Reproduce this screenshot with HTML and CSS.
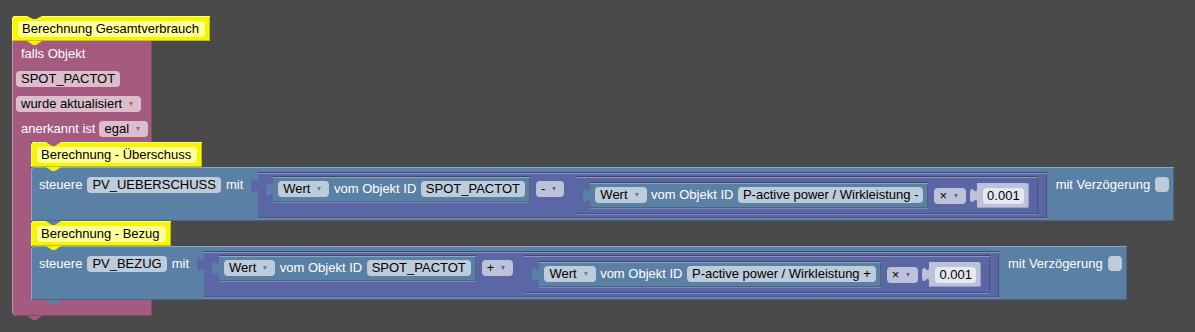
FILE: index.html
```html
<!DOCTYPE html>
<html lang="de">
	<head>
		<meta charset="UTF-8" />
		<meta name="viewport" content="width=device-width, initial-scale=1.0" />
		<title>Blockly</title>
		<link rel="stylesheet" href="styles.css">
	</head>
	<body>
		<div class="workspace">
			<div class="event">
				<div class="stmt comment first"><span class="cfield">Berechnung Gesamtverbrauch</span></div>
				<div class="event-head">
					<div class="hrow"><span class="lbl">falls Objekt</span></div>
					<div class="hrow"><span class="fld">SPOT_PACTOT</span></div>
					<div class="hrow"><span class="fld dd">wurde aktualisiert<i class="arr"></i></span></div>
					<div class="hrow"><span class="lbl">anerkannt ist</span><span class="fld dd">egal<i class="arr"></i></span></div>
				</div>
				<div class="event-mouth">
					<div class="event-arm"></div>
					<div class="stack">
						<div class="stmt comment"><span class="cfield">Berechnung - Überschuss</span></div>
						<div class="stmt set">
							<div class="set-head"><span class="lbl">steuere</span><span class="fld">PV_UEBERSCHUSS</span><span class="lbl">mit</span></div>
							<div class="val">
								<svg class="tab math-fill" viewBox="0 0 8 15" preserveAspectRatio="none"><path d="M8 0C8 10 0 -8 0 7.5C0 23 8 5 8 15Z"/></svg>
								<div class="math">
									<div class="val">
										<svg class="tab get-fill" viewBox="0 0 8 15" preserveAspectRatio="none"><path d="M8 0C8 10 0 -8 0 7.5C0 23 8 5 8 15Z"/></svg>
										<div class="get"><span class="fld dd">Wert<i class="arr"></i></span><span class="lbl">vom Objekt ID</span><span class="fld">SPOT_PACTOT</span></div>
									</div>
									<span class="fld dd">-<i class="arr"></i></span>
									<div class="val">
										<svg class="tab math-fill" viewBox="0 0 8 15" preserveAspectRatio="none"><path d="M8 0C8 10 0 -8 0 7.5C0 23 8 5 8 15Z"/></svg>
										<div class="math inner">
											<div class="val">
												<svg class="tab get-fill" viewBox="0 0 8 15" preserveAspectRatio="none"><path d="M8 0C8 10 0 -8 0 7.5C0 23 8 5 8 15Z"/></svg>
												<div class="get"><span class="fld dd">Wert<i class="arr"></i></span><span class="lbl">vom Objekt ID</span><span class="fld">P-active power / Wirkleistung -</span></div>
											</div>
											<span class="fld dd">×<i class="arr"></i></span>
											<div class="val">
												<svg class="tab num-fill" viewBox="0 0 8 15" preserveAspectRatio="none"><path d="M8 0C8 10 0 -8 0 7.5C0 23 8 5 8 15Z"/></svg>
												<div class="num"><span class="fld">0.001</span></div>
											</div>
										</div>
									</div>
								</div>
							</div>
							<span class="lbl delay">mit Verzögerung</span><span class="check"></span>
						</div>
						<div class="stmt comment"><span class="cfield">Berechnung - Bezug</span></div>
						<div class="stmt set">
							<div class="set-head"><span class="lbl">steuere</span><span class="fld">PV_BEZUG</span><span class="lbl">mit</span></div>
							<div class="val">
								<svg class="tab math-fill" viewBox="0 0 8 15" preserveAspectRatio="none"><path d="M8 0C8 10 0 -8 0 7.5C0 23 8 5 8 15Z"/></svg>
								<div class="math">
									<div class="val">
										<svg class="tab get-fill" viewBox="0 0 8 15" preserveAspectRatio="none"><path d="M8 0C8 10 0 -8 0 7.5C0 23 8 5 8 15Z"/></svg>
										<div class="get"><span class="fld dd">Wert<i class="arr"></i></span><span class="lbl">vom Objekt ID</span><span class="fld">SPOT_PACTOT</span></div>
									</div>
									<span class="fld dd">+<i class="arr"></i></span>
									<div class="val">
										<svg class="tab math-fill" viewBox="0 0 8 15" preserveAspectRatio="none"><path d="M8 0C8 10 0 -8 0 7.5C0 23 8 5 8 15Z"/></svg>
										<div class="math inner">
											<div class="val">
												<svg class="tab get-fill" viewBox="0 0 8 15" preserveAspectRatio="none"><path d="M8 0C8 10 0 -8 0 7.5C0 23 8 5 8 15Z"/></svg>
												<div class="get"><span class="fld dd">Wert<i class="arr"></i></span><span class="lbl">vom Objekt ID</span><span class="fld">P-active power / Wirkleistung +</span></div>
											</div>
											<span class="fld dd">×<i class="arr"></i></span>
											<div class="val">
												<svg class="tab num-fill" viewBox="0 0 8 15" preserveAspectRatio="none"><path d="M8 0C8 10 0 -8 0 7.5C0 23 8 5 8 15Z"/></svg>
												<div class="num"><span class="fld">0.001</span></div>
											</div>
										</div>
									</div>
								</div>
							</div>
							<span class="lbl delay">mit Verzögerung</span><span class="check"></span>
						</div>
					</div>
				</div>
				<div class="event-foot"></div>
			</div>
		</div>
	</body>
</html>
```

FILE: styles.css
```css
* {
	box-sizing: border-box;
}

body {
	margin: 0;
	height: 332px;
	overflow: hidden;
	background: #4a4a4a;
	font: 13px "Liberation Sans", Arial, sans-serif;
}

.workspace {
	padding: 16px 0 0 12px;
}

/* statement blocks stacked on top of each other */
.event,
.stack {
	display: flex;
	flex-direction: column;
	align-items: flex-start;
}

.stmt {
	position: relative;
	border-radius: 4px 0 0 0;
}

/* the next-connection tab hanging under a statement block */
.stmt::after,
.event-head::after,
.event-foot::after {
	content: "";
	position: absolute;
	top: 100%;
	left: 15px;
	width: 15px;
	height: 4px;
	background: inherit;
	clip-path: polygon(0 0, 100% 0, 9px 100%, 6px 100%);
	z-index: 2;
}

.first::before {
	content: "";
	position: absolute;
	top: 0;
	left: 15px;
	width: 15px;
	height: 3px;
	background: #4a4a4a;
	clip-path: polygon(0 0, 100% 0, 9px 100%, 6px 100%);
}

.lbl {
	color: #fff;
	line-height: 16px;
	white-space: nowrap;
}

.fld {
	display: inline-flex;
	align-items: center;
	height: 16px;
	line-height: 16px;
	padding: 0 5px;
	border-radius: 4px;
	color: #000;
	white-space: nowrap;
}

.dd {
	padding-right: 8px;
}

.arr {
	width: 0;
	height: 0;
	margin-left: 7px;
	border-left: 2.5px solid transparent;
	border-right: 2.5px solid transparent;
	border-top: 4px solid;
}

/* comment block */
.comment {
	background: #f5f500;
	padding: 5px 5px 4px 6px;
	box-shadow: inset 0 1px 0 #ffff80, inset 1px 0 0 #ffff80, inset 0 -1px 0 #c2c200, inset -1px 0 0 #c2c200;
}

.cfield {
	display: block;
	height: 16px;
	line-height: 16px;
	padding: 0 6px 0 4px;
	border-radius: 4px;
	background: #ffff99;
	color: #000;
	white-space: nowrap;
}

/* trigger block (purple C shape) */
.event-head {
	position: relative;
	width: 140px;
	padding: 0 4px 1px;
	background: #a55b80;
	box-shadow: inset 1px 0 0 #c08ca6, inset -1px 0 0 #844966;
}

.event-head::after {
	left: 34px;
}

.hrow {
	display: flex;
	align-items: center;
	gap: 4px;
	height: 25px;
}

.hrow .lbl:first-child {
	margin-left: 5px;
}

.event-head .fld {
	background: #dbbdcc;
}

.event-head .arr {
	color: #a55b80;
}

.event-mouth {
	display: flex;
}

.event-arm {
	width: 19px;
	background: #a55b80;
	box-shadow: inset 1px 0 0 #c08ca6;
}

.event-foot {
	position: relative;
	width: 140px;
	height: 16px;
	background: #a55b80;
	border-radius: 0 0 0 5px;
	box-shadow: inset 1px 0 0 #c08ca6, inset 0 -1px 0 #844966, inset -1px 0 0 #844966;
}

/* "steuere ... mit" block */
.set {
	display: flex;
	align-items: flex-start;
	padding: 6px 5px 3px 8px;
	background: #5b80a5;
	box-shadow: inset 0 1px 0 #8ca6c0, inset 1px 0 0 #8ca6c0, inset 0 -1px 0 #496684, inset -1px 0 0 #496684;
}

.set-head {
	display: flex;
	align-items: center;
	gap: 5px;
	margin-top: 4px;
}

.set .fld {
	background: #bdccdb;
}

.set .arr {
	color: #5b80a5;
}

.set > .val {
	margin-left: 8px;
}

.delay {
	margin: 4px 0 0 9px;
}

.check {
	width: 14px;
	height: 15px;
	margin: 4px 0 0 5px;
	border-radius: 4px;
	background: #bdccdb;
}

/* value blocks with their output tab */
.val {
	display: flex;
	align-items: flex-start;
	flex: none;
}

.tab {
	flex: none;
	width: 7px;
	height: 15px;
	margin-top: 5px;
	overflow: visible;
}

.math-fill {
	fill: #5b67a5;
}

.get-fill {
	fill: #5b80a5;
}

.num-fill {
	fill: #bdc2db;
}

.math {
	display: flex;
	align-items: flex-start;
	padding: 4px 9px 4px 8px;
	background: #5b67a5;
	box-shadow: inset 0 1px 0 #8c95c0, inset 0 -1px 0 #495284, inset -1px 0 0 #495284, 0 -1px 0 #3f4770, 0 1px 0 #7c86b8;
}

.math.inner {
	align-items: center;
	padding: 6px 9px 6px 8px;
}

.math > .dd {
	margin: 4px 0 0 6px;
}

.set .math > .fld {
	background: #bdc2db;
}

.set .math > .fld .arr {
	color: #5b67a5;
}

.math.inner > .dd {
	margin-top: 0;
}

.math > .dd + .val {
	margin-left: 4px;
}

.get {
	display: flex;
	align-items: center;
	gap: 4.5px;
	padding: 4px 5px 5px;
	background: #5b80a5;
	box-shadow: inset 0 1px 0 #8ca6c0, inset 0 -1px 0 #496684, inset -1px 0 0 #496684, 0 -1px 0 #3f4770, 0 1px 0 #7c86b8;
}

.num {
	padding: 5px 5px 4px 6px;
	border-radius: 0 3px 3px 0;
	background: #bdc2db;
	box-shadow: inset 0 -1px 0 #9aa0c4, inset -1px 0 0 #9aa0c4;
}

.set .num .fld {
	padding: 0 4px;
	background: #e6e8f2;
}
```
